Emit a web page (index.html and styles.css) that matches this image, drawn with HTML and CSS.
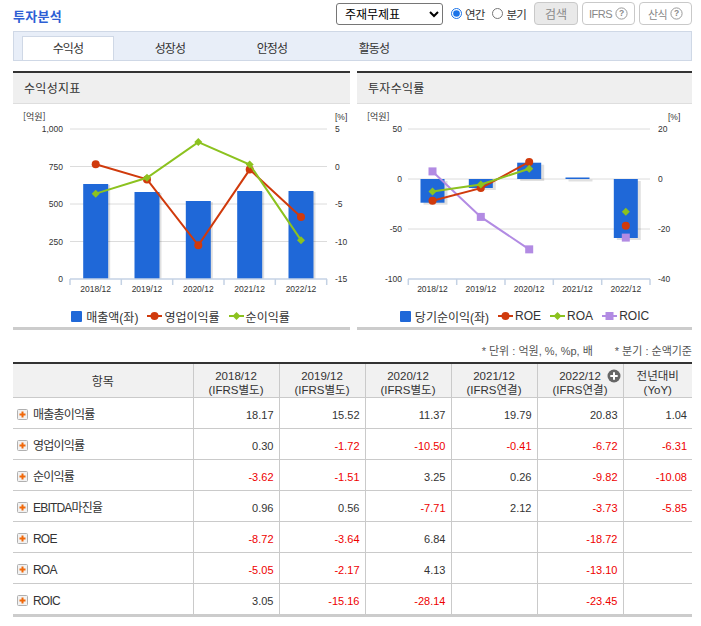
FILE: index.html
```html
<!DOCTYPE html>
<html lang="ko">
<head>
<meta charset="utf-8">
<title>투자분석</title>
<link rel="stylesheet" href="styles.css">
</head>
<body>
<div class="page">
  <div class="top">
    <h2 class="title">투자분석</h2>
    <div class="controls">
      <select class="sel"><option>주재무제표</option></select>
      <label class="radio"><input type="radio" name="period" checked>연간</label>
      <label class="radio"><input type="radio" name="period">분기</label>
      <button class="btn btn-search" type="button">검색</button>
      <button class="btn btn-help" type="button"><span class="btn-txt">IFRS</span><svg class="qicon" width="13" height="13" viewBox="0 0 13 13"><circle cx="6.5" cy="6.5" r="5.6" fill="#fff" stroke="#9a9a9a"/><text x="6.5" y="9.4" text-anchor="middle" class="qmark">?</text></svg></button>
      <button class="btn btn-help" type="button"><span class="btn-txt">산식</span><svg class="qicon" width="13" height="13" viewBox="0 0 13 13"><circle cx="6.5" cy="6.5" r="5.6" fill="#fff" stroke="#9a9a9a"/><text x="6.5" y="9.4" text-anchor="middle" class="qmark">?</text></svg></button>
    </div>
  </div>

  <div class="tabs">
    <div class="tab active">수익성</div>
    <div class="tab">성장성</div>
    <div class="tab">안정성</div>
    <div class="tab">활동성</div>
  </div>

  <div class="charts">
    <div class="panel">
      <div class="panel-head">수익성지표</div>
      <svg class="chart" width="337" height="202" viewBox="0 0 337 202">
        <g class="grid">
          <line x1="57" y1="25" x2="314" y2="25"/>
          <line x1="57" y1="62.5" x2="314" y2="62.5"/>
          <line x1="57" y1="100" x2="314" y2="100"/>
          <line x1="57" y1="137.5" x2="314" y2="137.5"/>
        </g>
        <text class="axk" x="10" y="16">[억원]</text>
        <text class="ax" x="50" y="28" text-anchor="end">1,000</text>
        <text class="ax" x="50" y="65.5" text-anchor="end">750</text>
        <text class="ax" x="50" y="103" text-anchor="end">500</text>
        <text class="ax" x="50" y="140.5" text-anchor="end">250</text>
        <text class="ax" x="50" y="178" text-anchor="end">0</text>
        <text class="ax" x="322" y="16">[%]</text>
        <text class="ax" x="322" y="28">5</text>
        <text class="ax" x="322" y="65.5">0</text>
        <text class="ax" x="322" y="103">-5</text>
        <text class="ax" x="322" y="140.5">-10</text>
        <text class="ax" x="322" y="178">-15</text>
        <g class="shadow">
          <rect x="72.2" y="81" width="25" height="94"/>
          <rect x="123.5" y="89" width="25" height="86"/>
          <rect x="174.8" y="98" width="25" height="77"/>
          <rect x="226.2" y="88" width="25" height="87"/>
          <rect x="277.5" y="88" width="25" height="87"/>
        </g>
        <g class="bar">
          <rect x="70.2" y="80" width="25" height="95"/>
          <rect x="121.5" y="88" width="25" height="87"/>
          <rect x="172.8" y="97" width="25" height="78"/>
          <rect x="224.2" y="87" width="25" height="88"/>
          <rect x="275.5" y="87" width="25" height="88"/>
        </g>
        <g class="axis">
          <line x1="57" y1="175" x2="314" y2="175"/>
          <line x1="57" y1="175" x2="57" y2="181"/>
          <line x1="108.3" y1="175" x2="108.3" y2="181"/>
          <line x1="159.7" y1="175" x2="159.7" y2="181"/>
          <line x1="211" y1="175" x2="211" y2="181"/>
          <line x1="262.3" y1="175" x2="262.3" y2="181"/>
          <line x1="313.7" y1="175" x2="313.7" y2="181"/>
        </g>
        <text class="ax" x="82.7" y="188" text-anchor="middle">2018/12</text>
        <text class="ax" x="134" y="188" text-anchor="middle">2019/12</text>
        <text class="ax" x="185.3" y="188" text-anchor="middle">2020/12</text>
        <text class="ax" x="236.7" y="188" text-anchor="middle">2021/12</text>
        <text class="ax" x="288" y="188" text-anchor="middle">2022/12</text>
        <polyline class="ln-red" points="82.7,60.25 134,75.4 185.3,141.25 236.7,65.6 288,112.9"/>
        <g class="mk-red">
          <circle cx="82.7" cy="60.25" r="4"/>
          <circle cx="134" cy="75.4" r="4"/>
          <circle cx="185.3" cy="141.25" r="4"/>
          <circle cx="236.7" cy="65.6" r="4"/>
          <circle cx="288" cy="112.9" r="4"/>
        </g>
        <polyline class="ln-green" points="82.7,89.65 134,73.8 185.3,38.1 236.7,60.55 288,136.15"/>
        <g class="mk-green">
          <polygon points="82.7,85.65 86.7,89.65 82.7,93.65 78.7,89.65"/>
          <polygon points="134,69.8 138,73.8 134,77.8 130,73.8"/>
          <polygon points="185.3,34.1 189.3,38.1 185.3,42.1 181.3,38.1"/>
          <polygon points="236.7,56.55 240.7,60.55 236.7,64.55 232.7,60.55"/>
          <polygon points="288,132.15 292,136.15 288,140.15 284,136.15"/>
        </g>
      </svg>
      <div class="legend legend-left">
        <span class="lg"><span class="sq"></span>매출액(좌)</span>
        <span class="lg"><svg class="lm" width="15" height="10" viewBox="0 0 15 10"><line x1="0" y1="5" x2="15" y2="5" stroke="#d03a0c" stroke-width="2"/><circle cx="7.5" cy="5" r="4" fill="#d03a0c"/></svg>영업이익률</span>
        <span class="lg"><svg class="lm" width="15" height="10" viewBox="0 0 15 10"><line x1="0" y1="5" x2="15" y2="5" stroke="#8cc21f" stroke-width="2"/><polygon points="7.5,1 11.5,5 7.5,9 3.5,5" fill="#8cc21f"/></svg>순이익률</span>
      </div>
    </div>

    <div class="panel">
      <div class="panel-head">투자수익률</div>
      <svg class="chart" width="335" height="202" viewBox="0 0 335 202">
        <g class="grid">
          <line x1="51" y1="25" x2="293" y2="25"/>
          <line x1="51" y1="75" x2="293" y2="75"/>
          <line x1="51" y1="125" x2="293" y2="125"/>
        </g>
        <text class="axk" x="10" y="16">[억원]</text>
        <text class="ax" x="45" y="28" text-anchor="end">50</text>
        <text class="ax" x="45" y="78" text-anchor="end">0</text>
        <text class="ax" x="45" y="128" text-anchor="end">-50</text>
        <text class="ax" x="45" y="178" text-anchor="end">-100</text>
        <text class="ax" x="311" y="16">[%]</text>
        <text class="ax" x="301" y="28">20</text>
        <text class="ax" x="301" y="78">0</text>
        <text class="ax" x="301" y="128">-20</text>
        <text class="ax" x="301" y="178">-40</text>
        <g class="shadow">
          <rect x="66.5" y="77" width="24" height="23.7"/>
          <rect x="114.8" y="77" width="24" height="9"/>
          <rect x="163.2" y="60.7" width="24" height="16.3"/>
          <rect x="211.5" y="75.5" width="24" height="2"/>
          <rect x="259.8" y="77" width="24" height="59"/>
        </g>
        <g class="bar">
          <rect x="63.5" y="75" width="24" height="23.7"/>
          <rect x="111.8" y="75" width="24" height="9"/>
          <rect x="160.2" y="58.7" width="24" height="16.3"/>
          <rect x="208.5" y="73.5" width="24" height="1.5"/>
          <rect x="256.8" y="75" width="24" height="59"/>
        </g>
        <g class="axis">
          <line x1="51" y1="175" x2="293" y2="175"/>
          <line x1="51.3" y1="175" x2="51.3" y2="181"/>
          <line x1="99.7" y1="175" x2="99.7" y2="181"/>
          <line x1="148" y1="175" x2="148" y2="181"/>
          <line x1="196.3" y1="175" x2="196.3" y2="181"/>
          <line x1="244.7" y1="175" x2="244.7" y2="181"/>
          <line x1="293" y1="175" x2="293" y2="181"/>
        </g>
        <text class="ax" x="75.5" y="188" text-anchor="middle">2018/12</text>
        <text class="ax" x="123.8" y="188" text-anchor="middle">2019/12</text>
        <text class="ax" x="172.2" y="188" text-anchor="middle">2020/12</text>
        <text class="ax" x="220.5" y="188" text-anchor="middle">2021/12</text>
        <text class="ax" x="268.8" y="188" text-anchor="middle">2022/12</text>
        <polyline class="ln-purple" points="75.5,67.4 123.8,112.9 172.2,145.35"/>
        <g class="mk-purple">
          <rect x="71.5" y="63.4" width="8" height="8"/>
          <rect x="119.8" y="108.9" width="8" height="8"/>
          <rect x="168.2" y="141.35" width="8" height="8"/>
          <rect x="264.8" y="129.6" width="8" height="8"/>
        </g>
        <polyline class="ln-red" points="75.5,96.8 123.8,84.1 172.2,57.9"/>
        <g class="mk-red">
          <circle cx="75.5" cy="96.8" r="4"/>
          <circle cx="123.8" cy="84.1" r="4"/>
          <circle cx="172.2" cy="57.9" r="4"/>
          <circle cx="268.8" cy="121.8" r="4"/>
        </g>
        <polyline class="ln-green" points="75.5,87.6 123.8,80.4 172.2,64.7"/>
        <g class="mk-green">
          <polygon points="75.5,83.6 79.5,87.6 75.5,91.6 71.5,87.6"/>
          <polygon points="123.8,76.4 127.8,80.4 123.8,84.4 119.8,80.4"/>
          <polygon points="172.2,60.7 176.2,64.7 172.2,68.7 168.2,64.7"/>
          <polygon points="268.8,103.75 272.8,107.75 268.8,111.75 264.8,107.75"/>
        </g>
      </svg>
      <div class="legend">
        <span class="lg"><span class="sq"></span>당기순이익(좌)</span>
        <span class="lg"><svg class="lm" width="15" height="10" viewBox="0 0 15 10"><line x1="0" y1="5" x2="15" y2="5" stroke="#d03a0c" stroke-width="2"/><circle cx="7.5" cy="5" r="4" fill="#d03a0c"/></svg>ROE</span>
        <span class="lg"><svg class="lm" width="15" height="10" viewBox="0 0 15 10"><line x1="0" y1="5" x2="15" y2="5" stroke="#8cc21f" stroke-width="2"/><polygon points="7.5,1 11.5,5 7.5,9 3.5,5" fill="#8cc21f"/></svg>ROA</span>
        <span class="lg"><svg class="lm" width="15" height="10" viewBox="0 0 15 10"><line x1="0" y1="5" x2="15" y2="5" stroke="#b28be3" stroke-width="2"/><rect x="3.5" y="1" width="8" height="8" fill="#b28be3"/></svg>ROIC</span>
      </div>
    </div>
  </div>

  <div class="note">
    <span>* 단위 : 억원, %, %p, 배</span>
    <span>* 분기 : 순액기준</span>
  </div>

  <table class="data">
    <colgroup>
      <col class="c-item"><col class="c-num"><col class="c-num"><col class="c-num"><col class="c-num"><col class="c-num"><col class="c-yoy">
    </colgroup>
    <thead>
      <tr>
        <th>항목</th>
        <th>2018/12<br>(IFRS별도)</th>
        <th>2019/12<br>(IFRS별도)</th>
        <th>2020/12<br>(IFRS별도)</th>
        <th>2021/12<br>(IFRS연결)</th>
        <th class="has-more">2022/12<br>(IFRS연결)<svg class="more" width="14" height="14" viewBox="0 0 14 14"><circle cx="7" cy="7" r="6.5" fill="#666"/><path d="M7 3.3v7.4M3.3 7h7.4" stroke="#fff" stroke-width="2"/></svg></th>
        <th>전년대비<br>(YoY)</th>
      </tr>
    </thead>
    <tbody>
      <tr><td class="item"><svg class="plus" width="11" height="11" viewBox="0 0 11 11"><rect x="0.5" y="0.5" width="10" height="10" rx="1" class="plus-box"/><path d="M5.5 2.5v6M2.5 5.5h6" class="plus-sign"/></svg>매출총이익률</td><td>18.17</td><td>15.52</td><td>11.37</td><td>19.79</td><td>20.83</td><td>1.04</td></tr>
      <tr><td class="item"><svg class="plus" width="11" height="11" viewBox="0 0 11 11"><rect x="0.5" y="0.5" width="10" height="10" rx="1" class="plus-box"/><path d="M5.5 2.5v6M2.5 5.5h6" class="plus-sign"/></svg>영업이익률</td><td>0.30</td><td class="neg">-1.72</td><td class="neg">-10.50</td><td class="neg">-0.41</td><td class="neg">-6.72</td><td class="neg">-6.31</td></tr>
      <tr><td class="item"><svg class="plus" width="11" height="11" viewBox="0 0 11 11"><rect x="0.5" y="0.5" width="10" height="10" rx="1" class="plus-box"/><path d="M5.5 2.5v6M2.5 5.5h6" class="plus-sign"/></svg>순이익률</td><td class="neg">-3.62</td><td class="neg">-1.51</td><td>3.25</td><td>0.26</td><td class="neg">-9.82</td><td class="neg">-10.08</td></tr>
      <tr><td class="item"><svg class="plus" width="11" height="11" viewBox="0 0 11 11"><rect x="0.5" y="0.5" width="10" height="10" rx="1" class="plus-box"/><path d="M5.5 2.5v6M2.5 5.5h6" class="plus-sign"/></svg>EBITDA마진율</td><td>0.96</td><td>0.56</td><td class="neg">-7.71</td><td>2.12</td><td class="neg">-3.73</td><td class="neg">-5.85</td></tr>
      <tr><td class="item"><svg class="plus" width="11" height="11" viewBox="0 0 11 11"><rect x="0.5" y="0.5" width="10" height="10" rx="1" class="plus-box"/><path d="M5.5 2.5v6M2.5 5.5h6" class="plus-sign"/></svg>ROE</td><td class="neg">-8.72</td><td class="neg">-3.64</td><td>6.84</td><td></td><td class="neg">-18.72</td><td></td></tr>
      <tr><td class="item"><svg class="plus" width="11" height="11" viewBox="0 0 11 11"><rect x="0.5" y="0.5" width="10" height="10" rx="1" class="plus-box"/><path d="M5.5 2.5v6M2.5 5.5h6" class="plus-sign"/></svg>ROA</td><td class="neg">-5.05</td><td class="neg">-2.17</td><td>4.13</td><td></td><td class="neg">-13.10</td><td></td></tr>
      <tr><td class="item"><svg class="plus" width="11" height="11" viewBox="0 0 11 11"><rect x="0.5" y="0.5" width="10" height="10" rx="1" class="plus-box"/><path d="M5.5 2.5v6M2.5 5.5h6" class="plus-sign"/></svg>ROIC</td><td>3.05</td><td class="neg">-15.16</td><td class="neg">-28.14</td><td></td><td class="neg">-23.45</td><td></td></tr>
    </tbody>
  </table>
</div>
</body>
</html>
```

FILE: styles.css
```css
* { box-sizing: border-box; }

body {
  margin: 0;
  background: #fff;
  color: #333;
  font-family: "Liberation Sans", "Noto Sans CJK KR", sans-serif;
  font-size: 12px;
}

.page {
  width: 701px;
  padding: 0 9px 0 13px;
}

/* top bar */
.top {
  display: flex;
  justify-content: space-between;
  align-items: center;
  height: 23px;
  margin-top: 2px;
}

.title {
  margin: 5px 0 0;
  font-family: "Noto Sans CJK KR", sans-serif;
  font-size: 13px;
  font-weight: bold;
  letter-spacing: 0.3px;
  line-height: 16px;
  color: #2d5fd4;
}

.controls {
  display: flex;
  align-items: center;
  height: 23px;
}

.sel {
  width: 107px;
  height: 22px;
  margin: 0 8px 0 0;
  padding: 0 4px;
  font-family: "Noto Sans CJK KR", sans-serif;
  font-size: 12px;
  color: #000;
  border: 1px solid #767676;
  border-radius: 3px;
  background: #fff;
}

.radio {
  display: flex;
  align-items: center;
  font-family: "Noto Sans CJK KR", sans-serif;
  font-size: 11.5px;
  letter-spacing: -0.8px;
  color: #333;
  margin-right: 8px;
}
.radio input {
  width: 11px;
  height: 11px;
  margin: 0 3px 0 0;
  accent-color: #1a73e8;
}

.btn {
  height: 23px;
  margin: 0 0 0 4px;
  padding: 0;
  border: 1px solid #c9c9c9;
  border-radius: 4px;
  background: #fff;
  color: #888;
  font-family: "Liberation Sans", "Noto Sans CJK KR", sans-serif;
  font-size: 11px;
  display: flex;
  align-items: center;
  justify-content: center;
}
.btn-search {
  width: 44px;
  margin-left: 0;
  background: #e9e9e9;
  color: #8a8a8a;
  font-size: 12px;
}
.btn-help { width: 53px; gap: 3px; }
.btn-help:first-of-type { width: 54px; }
.btn-txt { letter-spacing: -0.5px; }
.qicon { display: block; }
.qmark {
  font-family: "Liberation Sans", sans-serif;
  font-size: 8.5px;
  font-weight: bold;
  fill: #8a8a8a;
}

/* tabs */
.tabs {
  display: flex;
  align-items: flex-end;
  gap: 10px;
  height: 30px;
  margin-top: 6px;
  padding-left: 8px;
  border: 1px solid #cfd8e6;
  background: #e8eef8;
}
.tab {
  width: 92px;
  height: 24px;
  line-height: 22px;
  text-align: center;
  font-family: "Noto Sans CJK KR", sans-serif;
  font-size: 12px;
  letter-spacing: -0.8px;
  color: #333;
  border: 1px solid transparent;
  border-bottom: 0;
}
.tab.active {
  background: #fff;
  border-color: #cfd8e6;
}

/* chart panels */
.charts {
  display: grid;
  grid-template-columns: 337px 335px;
  column-gap: 7px;
  margin-top: 10px;
}
.panel {
  border-top: 2px solid #333;
  border-bottom: 3px solid #ccc;
}
.panel-head {
  height: 31px;
  line-height: 30px;
  padding-left: 11px;
  background: #efefef;
  border-bottom: 1px solid #dedede;
  font-family: "Noto Sans CJK KR", sans-serif;
  font-size: 12px;
  letter-spacing: 0.3px;
  color: #333;
}
.chart { display: block; }

.grid line { stroke: #dcdcdc; stroke-width: 1; }
.axis line { stroke: #c4d2e4; stroke-width: 1.5; }
.bar rect { fill: #1f68d8; }
.shadow rect { fill: #000; opacity: 0.12; }
.ax {
  font-family: "Liberation Sans", sans-serif;
  font-size: 8.5px;
  fill: #333;
}
.axk {
  font-family: "Noto Sans CJK KR", sans-serif;
  font-size: 9px;
  fill: #333;
}
.ln-red { fill: none; stroke: #d03a0c; stroke-width: 2; }
.ln-green { fill: none; stroke: #8cc21f; stroke-width: 2; }
.ln-purple { fill: none; stroke: #b28be3; stroke-width: 2; }
.mk-red circle { fill: #d03a0c; }
.mk-green polygon { fill: #8cc21f; }
.mk-purple rect { fill: #b28be3; }

.legend {
  display: flex;
  justify-content: center;
  align-items: center;
  gap: 9px;
  height: 21px;
  padding-bottom: 1px;
  font-family: "Liberation Sans", "Noto Sans CJK KR", sans-serif;
  font-size: 12px;
  color: #333;
}
.legend-left { padding-right: 2px; }
.lg {
  display: flex;
  align-items: center;
  white-space: nowrap;
}
.sq {
  width: 11px;
  height: 11px;
  margin-right: 4px;
  background: #1f68d8;
  border-radius: 1px;
}
.lm { display: block; margin-right: 2px; }

/* note */
.note {
  display: flex;
  justify-content: flex-end;
  gap: 22px;
  margin-top: 14px;
  height: 14px;
  line-height: 14px;
  font-family: "Liberation Sans", "Noto Sans CJK KR", sans-serif;
  font-size: 11px;
  color: #555;
}

/* table */
.data {
  width: 679px;
  margin-top: 4px;
  table-layout: fixed;
  border-collapse: collapse;
  border-top: 2px solid #333;
  border-bottom: 3px solid #ccc;
}
.c-item { width: 180px; }
.c-num { width: 86px; }
.c-yoy { width: 69px; }

.data th {
  position: relative;
  padding: 5px 0 0;
  height: 34px;
  line-height: 14px;
  vertical-align: top;
  background: #f1f1f1;
  font-weight: normal;
  font-size: 11.5px;
  color: #333;
  text-align: center;
  border-left: 1px solid #cacaca;
  border-bottom: 1px solid #cacaca;
}
.data th:first-child {
  border-left: 0;
  vertical-align: middle;
  padding: 2px 0 0;
  font-size: 12px;
}
.more {
  position: absolute;
  right: 2px;
  top: 5px;
}

.data td {
  height: 31px;
  padding: 7px 5px 2px 0;
  line-height: 21px;
  text-align: right;
  font-size: 11px;
  color: #333;
  border-left: 1px solid #cacaca;
  border-bottom: 1px solid #cacaca;
}
.data td.item {
  border-left: 0;
  text-align: left;
  padding-left: 4px;
  font-size: 12px;
  letter-spacing: -0.8px;
}
.data td.neg { color: #ee0000; }

.plus {
  display: inline-block;
  vertical-align: -1px;
  margin-right: 5px;
}
.plus-box { fill: #f2f2f2; stroke: #b0b0b0; }
.plus-sign { stroke: #f0680a; stroke-width: 2; fill: none; }
```
